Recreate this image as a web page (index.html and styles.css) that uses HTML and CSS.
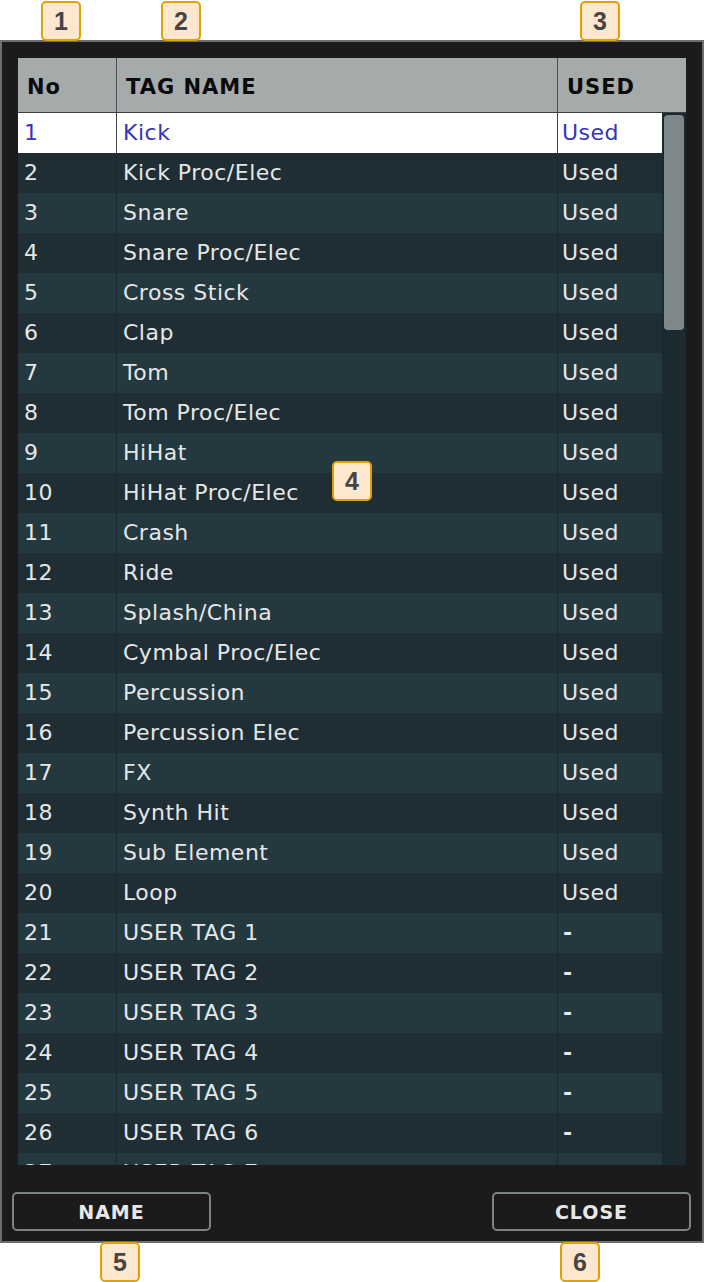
FILE: index.html
```html
<!DOCTYPE html>
<html>
<head>
<meta charset="utf-8">
<link rel="stylesheet" href="styles.css">
</head>
<body>
<div class="page">
  <div class="panel">
    <div class="table">
      <div class="thead">
        <div class="th">No</div>
        <div class="th">TAG NAME</div>
        <div class="th">USED</div>
      </div>
      <div class="tbody">
        <div class="rows">
          <div class="row sel"><div class="td">1</div><div class="td">Kick</div><div class="td">Used</div></div>
          <div class="row"><div class="td">2</div><div class="td">Kick Proc/Elec</div><div class="td">Used</div></div>
          <div class="row alt"><div class="td">3</div><div class="td">Snare</div><div class="td">Used</div></div>
          <div class="row"><div class="td">4</div><div class="td">Snare Proc/Elec</div><div class="td">Used</div></div>
          <div class="row alt"><div class="td">5</div><div class="td">Cross Stick</div><div class="td">Used</div></div>
          <div class="row"><div class="td">6</div><div class="td">Clap</div><div class="td">Used</div></div>
          <div class="row alt"><div class="td">7</div><div class="td">Tom</div><div class="td">Used</div></div>
          <div class="row"><div class="td">8</div><div class="td">Tom Proc/Elec</div><div class="td">Used</div></div>
          <div class="row alt"><div class="td">9</div><div class="td">HiHat</div><div class="td">Used</div></div>
          <div class="row"><div class="td">10</div><div class="td">HiHat Proc/Elec</div><div class="td">Used</div></div>
          <div class="row alt"><div class="td">11</div><div class="td">Crash</div><div class="td">Used</div></div>
          <div class="row"><div class="td">12</div><div class="td">Ride</div><div class="td">Used</div></div>
          <div class="row alt"><div class="td">13</div><div class="td">Splash/China</div><div class="td">Used</div></div>
          <div class="row"><div class="td">14</div><div class="td">Cymbal Proc/Elec</div><div class="td">Used</div></div>
          <div class="row alt"><div class="td">15</div><div class="td">Percussion</div><div class="td">Used</div></div>
          <div class="row"><div class="td">16</div><div class="td">Percussion Elec</div><div class="td">Used</div></div>
          <div class="row alt"><div class="td">17</div><div class="td">FX</div><div class="td">Used</div></div>
          <div class="row"><div class="td">18</div><div class="td">Synth Hit</div><div class="td">Used</div></div>
          <div class="row alt"><div class="td">19</div><div class="td">Sub Element</div><div class="td">Used</div></div>
          <div class="row"><div class="td">20</div><div class="td">Loop</div><div class="td">Used</div></div>
          <div class="row alt"><div class="td">21</div><div class="td">USER TAG 1</div><div class="td dash">-</div></div>
          <div class="row"><div class="td">22</div><div class="td">USER TAG 2</div><div class="td dash">-</div></div>
          <div class="row alt"><div class="td">23</div><div class="td">USER TAG 3</div><div class="td dash">-</div></div>
          <div class="row"><div class="td">24</div><div class="td">USER TAG 4</div><div class="td dash">-</div></div>
          <div class="row alt"><div class="td">25</div><div class="td">USER TAG 5</div><div class="td dash">-</div></div>
          <div class="row"><div class="td">26</div><div class="td">USER TAG 6</div><div class="td dash">-</div></div>
          <div class="row alt"><div class="td">27</div><div class="td">USER TAG 7</div><div class="td dash">-</div></div>
        </div>
        <div class="scrollbar"><div class="thumb"></div></div>
      </div>
    </div>
    <div class="buttons">
      <button class="btn">NAME</button>
      <button class="btn">CLOSE</button>
    </div>
  </div>
  <div class="badge b1">1</div>
  <div class="badge b2">2</div>
  <div class="badge b3">3</div>
  <div class="badge b4">4</div>
  <div class="badge b5">5</div>
  <div class="badge b6">6</div>
</div>
</body>
</html>
```

FILE: styles.css
```css
html, body {
  margin: 0;
  padding: 0;
  background: #ffffff;
}
.page {
  position: relative;
  width: 706px;
  height: 1282px;
  padding-top: 40px;
  box-sizing: border-box;
  font-family: "DejaVu Sans", "Liberation Sans", sans-serif;
}
.panel {
  width: 704px;
  height: 1203px;
  box-sizing: border-box;
  border: 2px solid #6e6e6e;
  background: #1b1b1b;
  padding: 16px 16px 10px 16px;
  display: flex;
  flex-direction: column;
}
.table {
  width: 668px;
  height: 1107px;
  display: flex;
  flex-direction: column;
  background: #1b2a30;
}
.thead {
  display: grid;
  grid-template-columns: 98px 440px 128px;
  column-gap: 1px;
  height: 54px;
  background: #4c5356;
  border-bottom: 1px solid #3a4043;
  flex: none;
}
.th {
  background: #a5aaab;
  color: #0a0a0a;
  font-weight: bold;
  font-size: 21px;
  letter-spacing: 1px;
  padding-left: 9px;
  display: flex;
  align-items: center;
  padding-top: 3px;
}
.tbody {
  flex: 1;
  display: flex;
  overflow: hidden;
}
.rows {
  width: 644px;
  flex: none;
  overflow: hidden;
}
.row {
  display: grid;
  grid-template-columns: 98px 440px 104px;
  column-gap: 1px;
  height: 40px;
  background: #1a282e;
}
.td {
  background: #1e2e34;
  color: #e6e6e6;
  font-size: 22px;
  letter-spacing: 0.5px;
  display: flex;
  align-items: center;
  padding-left: 6px;
  padding-bottom: 2px;
  white-space: nowrap;
}
.td:nth-child(3) {
  padding-left: 4px;
}
.row.alt .td {
  background: #243840;
}
.row.sel {
  background: #3f4a4f;
}
.row.sel .td {
  background: #ffffff;
  color: #3535b6;
}
.td.dash {
  font-weight: bold;
  padding-left: 5px;
}
.scrollbar {
  flex: 1;
  background: #1a2a30;
  padding: 2px 2px 0 2px;
}
.thumb {
  height: 215px;
  background: #7e8789;
  border-radius: 4px;
}
.buttons {
  margin-top: 27px;
  display: flex;
  justify-content: space-between;
  margin-left: -6px;
  margin-right: -5px;
}
.btn {
  width: 199px;
  height: 39px;
  box-sizing: border-box;
  border: 2px solid #7a8284;
  border-radius: 5px;
  background: #1b1b1b;
  color: #e8e8e8;
  font-family: "DejaVu Sans", "Liberation Sans", sans-serif;
  font-weight: bold;
  font-size: 19px;
  letter-spacing: 1px;
  padding: 0;
  padding-top: 1px;
}
.badge {
  position: absolute;
  width: 40px;
  height: 40px;
  box-sizing: border-box;
  border: 2px solid #e1a100;
  border-radius: 5px;
  background: #fee7cf;
  color: #454545;
  font-family: "Liberation Sans", "DejaVu Sans", sans-serif;
  font-weight: bold;
  font-size: 25px;
  display: flex;
  align-items: center;
  justify-content: center;
}
.b1 { left: 41px; top: 1px; }
.b2 { left: 161px; top: 1px; }
.b3 { left: 580px; top: 1px; }
.b4 { left: 332px; top: 461px; }
.b5 { left: 100px; top: 1242px; }
.b6 { left: 560px; top: 1242px; }
```
